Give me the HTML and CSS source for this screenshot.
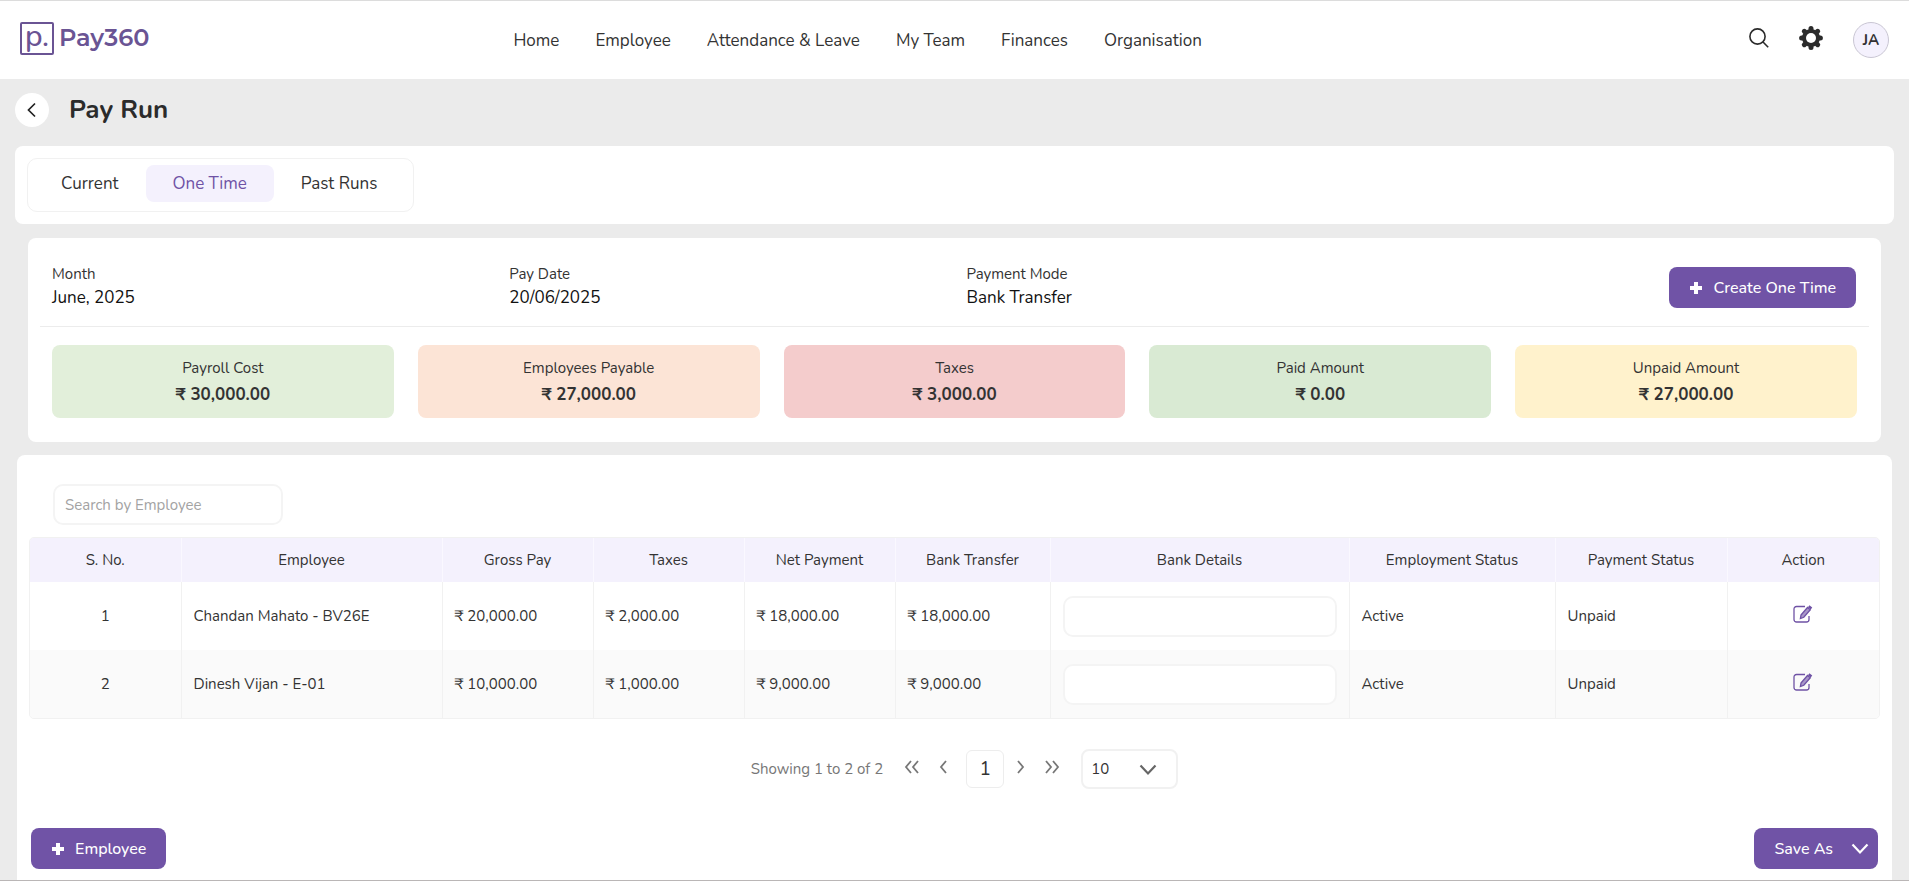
FILE: index.html
```html
<!DOCTYPE html>
<html lang="en">
<head>
    <meta charset="UTF-8">
    <meta name="viewport" content="width=device-width, initial-scale=1.0">
    <title>Pay Run - Pay360</title>
    <link rel="stylesheet" href="styles.css">
</head>
<body>
    <header class="topbar">
        <a href="#" class="logo">
            <span class="logo-box">p.</span>
            <span class="logo-text">Pay360</span>
        </a>
        <nav class="main-nav">
            <a href="#">Home</a>
            <a href="#">Employee</a>
            <a href="#">Attendance &amp; Leave</a>
            <a href="#">My Team</a>
            <a href="#">Finances</a>
            <a href="#">Organisation</a>
        </nav>
        <div class="top-actions">
            <button type="button" class="icon-btn" aria-label="Search">
                <svg width="20" height="20" viewBox="0 0 20 20" fill="none" stroke="#2b2b2b" stroke-width="1.6">
                    <circle cx="8.5" cy="8.5" r="7.6"/>
                    <path d="M14 14l5.2 5.2"/>
                </svg>
            </button>
            <button type="button" class="icon-btn" aria-label="Settings">
                <svg width="24" height="24" viewBox="0 0 24 24">
                    <g stroke="#2b2b2b" stroke-width="5" stroke-linecap="round">
                        <path d="M12 2.6v18.8M2.6 12h18.8M5.3 5.3l13.4 13.4M18.7 5.3L5.3 18.7"/>
                    </g>
                    <circle cx="12" cy="12" r="9" fill="#2b2b2b"/>
                    <circle cx="12" cy="12" r="5" fill="#fff"/>
                </svg>
            </button>
            <button type="button" class="avatar">JA</button>
        </div>
    </header>

    <main class="page">
        <div class="page-head">
            <button type="button" class="back-btn" aria-label="Back">
                <svg width="10" height="16" viewBox="0 0 10 16" fill="none" stroke="#222" stroke-width="1.7">
                    <path d="M8 1.5L1.5 8l6.5 6.5"/>
                </svg>
            </button>
            <h1>Pay Run</h1>
        </div>

        <section class="card tabs-card">
            <div class="tabs">
                <button type="button" class="tab">Current</button>
                <button type="button" class="tab active">One Time</button>
                <button type="button" class="tab">Past Runs</button>
            </div>
        </section>

        <section class="card summary">
            <div class="summary-top">
                <div class="field">
                    <span class="field-label">Month</span>
                    <span class="field-value">June, 2025</span>
                </div>
                <div class="field">
                    <span class="field-label">Pay Date</span>
                    <span class="field-value">20/06/2025</span>
                </div>
                <div class="field">
                    <span class="field-label">Payment Mode</span>
                    <span class="field-value">Bank Transfer</span>
                </div>
                <button type="button" class="btn btn-create">
                    <svg width="14" height="14" viewBox="0 0 14 14" fill="#fff"><path d="M5 1h4v4h4v4H9v4H5V9H1V5h4z"/></svg>
                    Create One Time
                </button>
            </div>
            <div class="stats">
                <div class="stat stat-cost">
                    <span>Payroll Cost</span>
                    <strong>₹ 30,000.00</strong>
                </div>
                <div class="stat stat-payable">
                    <span>Employees Payable</span>
                    <strong>₹ 27,000.00</strong>
                </div>
                <div class="stat stat-taxes">
                    <span>Taxes</span>
                    <strong>₹ 3,000.00</strong>
                </div>
                <div class="stat stat-paid">
                    <span>Paid Amount</span>
                    <strong>₹ 0.00</strong>
                </div>
                <div class="stat stat-unpaid">
                    <span>Unpaid Amount</span>
                    <strong>₹ 27,000.00</strong>
                </div>
            </div>
        </section>

        <section class="card employees">
            <input type="text" class="input search" placeholder="Search by Employee" aria-label="Search by Employee">

            <div class="table-wrap">
                <table>
                    <colgroup>
                        <col class="col-small">
                        <col class="col-employee">
                        <col class="col-small">
                        <col class="col-small">
                        <col class="col-small">
                        <col class="col-transfer">
                        <col class="col-details">
                        <col class="col-emp-status">
                        <col class="col-pay-status">
                        <col>
                    </colgroup>
                    <thead>
                        <tr>
                            <th>S. No.</th>
                            <th>Employee</th>
                            <th>Gross Pay</th>
                            <th>Taxes</th>
                            <th>Net Payment</th>
                            <th>Bank Transfer</th>
                            <th>Bank Details</th>
                            <th>Employment Status</th>
                            <th>Payment Status</th>
                            <th>Action</th>
                        </tr>
                    </thead>
                    <tbody>
                        <tr>
                            <td class="center">1</td>
                            <td>Chandan Mahato - BV26E</td>
                            <td>₹ 20,000.00</td>
                            <td>₹ 2,000.00</td>
                            <td>₹ 18,000.00</td>
                            <td>₹ 18,000.00</td>
                            <td><input type="text" class="input" aria-label="Bank details for Chandan Mahato"></td>
                            <td>Active</td>
                            <td>Unpaid</td>
                            <td class="center">
                                <button type="button" class="icon-btn" aria-label="Edit Chandan Mahato">
                                    <svg width="20" height="18" viewBox="0 0 20 18" fill="none" stroke="#6f52a5" stroke-width="1.3">
                                        <path d="M12 1.5H3.5a2.5 2.5 0 0 0-2.5 2.5v10.5A2.5 2.5 0 0 0 3.5 17h10a2.5 2.5 0 0 0 2.5-2.5V11"/>
                                        <path d="M8 10l6.5-7.5 2.8 2.3-6.5 7.5-3.4 1.3z" fill="#a896c9"/>
                                        <path d="M15.7 1.2l2.8 2.3" stroke-width="2.4"/>
                                    </svg>
                                </button>
                            </td>
                        </tr>
                        <tr>
                            <td class="center">2</td>
                            <td>Dinesh Vijan - E-01</td>
                            <td>₹ 10,000.00</td>
                            <td>₹ 1,000.00</td>
                            <td>₹ 9,000.00</td>
                            <td>₹ 9,000.00</td>
                            <td><input type="text" class="input" aria-label="Bank details for Dinesh Vijan"></td>
                            <td>Active</td>
                            <td>Unpaid</td>
                            <td class="center">
                                <button type="button" class="icon-btn" aria-label="Edit Dinesh Vijan">
                                    <svg width="20" height="18" viewBox="0 0 20 18" fill="none" stroke="#6f52a5" stroke-width="1.3">
                                        <path d="M12 1.5H3.5a2.5 2.5 0 0 0-2.5 2.5v10.5A2.5 2.5 0 0 0 3.5 17h10a2.5 2.5 0 0 0 2.5-2.5V11"/>
                                        <path d="M8 10l6.5-7.5 2.8 2.3-6.5 7.5-3.4 1.3z" fill="#a896c9"/>
                                        <path d="M15.7 1.2l2.8 2.3" stroke-width="2.4"/>
                                    </svg>
                                </button>
                            </td>
                        </tr>
                    </tbody>
                </table>
            </div>

            <div class="pagination">
                <span class="showing">Showing 1 to 2 of 2</span>
                <div class="pager">
                    <button type="button" class="icon-btn page-arrow" aria-label="First page">
                        <svg width="16" height="14" viewBox="0 0 16 14"><path d="M7 1L2 7l5 6M14 1L9 7l5 6"/></svg>
                    </button>
                    <button type="button" class="icon-btn page-arrow" aria-label="Previous page">
                        <svg width="8" height="14" viewBox="0 0 8 14"><path d="M7 1L2 7l5 6"/></svg>
                    </button>
                    <button type="button" class="page-number">1</button>
                    <button type="button" class="icon-btn page-arrow" aria-label="Next page">
                        <svg width="8" height="14" viewBox="0 0 8 14"><path d="M1 1l5 6-5 6"/></svg>
                    </button>
                    <button type="button" class="icon-btn page-arrow" aria-label="Last page">
                        <svg width="16" height="14" viewBox="0 0 16 14"><path d="M2 1l5 6-5 6M9 1l5 6-5 6"/></svg>
                    </button>
                </div>
                <div class="page-size">
                    <select aria-label="Rows per page">
                        <option>10</option>
                        <option>25</option>
                        <option>50</option>
                    </select>
                    <svg width="18" height="12" viewBox="0 0 18 12"><path d="M1.5 1.5L9 9.5l7.5-8"/></svg>
                </div>
            </div>

            <div class="footer-actions">
                <button type="button" class="btn btn-employee">
                    <svg width="14" height="14" viewBox="0 0 14 14" fill="#fff"><path d="M5 1h4v4h4v4H9v4H5V9H1V5h4z"/></svg>
                    Employee
                </button>
                <button type="button" class="btn btn-save">
                    Save As
                    <svg width="18" height="12" viewBox="0 0 18 12" fill="none" stroke="#fff" stroke-width="2.2"><path d="M1.5 1.5L9 9.5l7.5-8"/></svg>
                </button>
            </div>
        </section>
    </main>
</body>
</html>
```

FILE: styles.css
```css
* {
    box-sizing: border-box;
}
body {
    margin: 0;
    min-height: 100vh;
    display: flex;
    flex-direction: column;
    font-family: Nunito, "Open Sans", "Noto Sans", sans-serif;
    font-size: 15px;
    line-height: 20px;
    color: #333;
    background-color: #ebebeb;
    border-top: 1px solid #dcdcdc;
    border-bottom: 2px solid #bab6b6;
}
button, input, select {
    font: inherit;
    color: inherit;
}
button {
    cursor: pointer;
}
svg {
    display: block;
}

/* Top bar */
.topbar {
    display: grid;
    grid-template-columns: 26.4% 1fr auto;
    align-items: center;
    height: 78px;
    padding: 0 20px;
    background-color: #fff;
}
.logo {
    display: flex;
    align-items: center;
    gap: 5px;
    padding-bottom: 4px;
    color: #6a5494;
    text-decoration: none;
}
.logo-box {
    width: 34px;
    height: 33px;
    border: 2px solid #6a5494;
    border-radius: 2px;
    font-size: 30px;
    line-height: 26px;
    font-weight: 500;
    text-align: center;
}
.logo-text {
    font-family: Montserrat, Lato, sans-serif;
    font-size: 24px;
    line-height: 32px;
    font-weight: 600;
}
.main-nav {
    display: flex;
    gap: 36px;
    padding-top: 2px;
}
.main-nav a {
    color: #333;
    font-size: 17px;
    text-decoration: none;
}
.top-actions {
    display: flex;
    justify-content: flex-end;
    align-items: center;
    gap: 30px;
}
.icon-btn {
    display: inline-block;
    padding: 0 0 4px;
    border: none;
    background: none;
}
.avatar {
    width: 36px;
    height: 36px;
    padding: 0;
    border: 1px solid #c9c6d3;
    border-radius: 50%;
    background-color: #f4f1fd;
    font-weight: 700;
}

/* Page heading */
.page {
    flex: 1;
    display: flex;
    flex-direction: column;
    padding: 14px 15px 0;
}
.page-head {
    display: flex;
    align-items: center;
    gap: 20px;
    margin-bottom: 19px;
}
.back-btn {
    display: flex;
    align-items: center;
    justify-content: center;
    width: 34px;
    height: 34px;
    padding: 0;
    border: none;
    border-radius: 50%;
    background-color: #fff;
}
h1 {
    margin: 0;
    font-size: 26px;
    line-height: 32px;
    font-weight: 700;
    color: #2b2b2b;
}
.card {
    background-color: #fff;
    border-radius: 8px;
}

/* Tabs */
.tabs-card {
    padding: 12px;
}
.tabs {
    display: inline-flex;
    padding: 6px 9px 9px 6px;
    border: 1px solid #f1f1f1;
    border-radius: 10px;
    vertical-align: top;
}
.tab {
    height: 37px;
    padding: 0 27px;
    border: none;
    border-radius: 8px;
    background: none;
    font-size: 17px;
}
.tab.active {
    background-color: #f4f1fd;
    color: #6f52a5;
}

/* Summary */
.summary {
    margin: 14px 13px 13px;
    padding: 17px 12px 24px;
}
.summary-top {
    display: flex;
    align-items: center;
    padding-bottom: 6px;
    height: 72px;
    border-bottom: 1px solid #ececec;
}
.field {
    display: flex;
    flex-direction: column;
    gap: 4px;
    width: 25%;
    padding: 0 0 4px 12px;
}
.field-value {
    font-size: 17px;
    color: #111;
}
.btn {
    display: flex;
    align-items: center;
    height: 41px;
    border: none;
    border-radius: 8px;
    background-color: #7053a6;
    color: #fff;
    font-size: 16px;
    font-weight: 500;
    white-space: nowrap;
}
.btn-create {
    gap: 10px;
    margin-left: auto;
    margin-right: 13px;
    padding: 0 20px;
}
.stats {
    display: flex;
    gap: 24px;
    padding: 18px 12px 0;
}
.stat {
    flex: 1;
    display: flex;
    flex-direction: column;
    gap: 7px;
    padding: 13px 12px;
    border-radius: 8px;
    text-align: center;
}
.stat strong {
    font-size: 17px;
    font-weight: 700;
}
.stat-cost {
    background-color: #e2efda;
}
.stat-payable {
    background-color: #fce4d6;
}
.stat-taxes {
    background-color: #f4cccc;
}
.stat-paid {
    background-color: #d9ead3;
}
.stat-unpaid {
    background-color: #fff2cc;
}

/* Employees */
.employees {
    flex: 1;
    display: flex;
    flex-direction: column;
    margin: 0 2px;
    padding: 29px 12px 11px;
    border-radius: 8px 8px 0 0;
}
.input {
    width: 100%;
    height: 41px;
    padding: 0 10px;
    border: 2px solid #f4f4f4;
    border-radius: 10px;
    background-color: #fff;
}
.input::placeholder {
    color: #a3a3a3;
}
.search {
    width: 230px;
    margin: 0 24px 12px;
}
.table-wrap {
    border: 1px solid #f1f1f1;
    border-radius: 5px;
    overflow: hidden;
}
table {
    width: 100%;
    table-layout: fixed;
    border-collapse: collapse;
}
.col-small {
    width: 151px;
}
.col-employee {
    width: 261px;
}
.col-transfer {
    width: 155px;
}
.col-details {
    width: 299px;
}
.col-emp-status {
    width: 206px;
}
.col-pay-status {
    width: 172px;
}
th {
    height: 44px;
    padding: 0;
    background-color: #f4f1fd;
    border-right: 1px solid #faf8ff;
    font-weight: 400;
}
td {
    height: 68px;
    padding: 0 12px;
    border-right: 1px solid #f1f1f1;
}
th:last-child,
td:last-child {
    border-right: none;
}
tbody tr:nth-child(even) {
    background-color: #fafafa;
}
.center {
    text-align: center;
}

/* Pagination */
.pagination {
    display: flex;
    justify-content: center;
    align-items: center;
    gap: 21px;
    margin-top: 30px;
    padding-left: 20px;
}
.showing {
    color: #777;
}
.pager {
    display: flex;
    align-items: center;
    gap: 19px;
}
.page-arrow svg {
    fill: none;
    stroke: #777;
    stroke-width: 1.8;
}
.page-number {
    width: 38px;
    height: 38px;
    margin-right: -6px;
    padding: 0;
    border: 1px solid #ededed;
    border-radius: 6px;
    background-color: #fff;
    font-size: 19px;
}
.page-size {
    position: relative;
    width: 97px;
}
.page-size select {
    appearance: none;
    width: 100%;
    height: 40px;
    padding: 0 8px;
    border: 2px solid #f1f1f1;
    border-radius: 8px;
    background-color: #fff;
}
.page-size svg {
    position: absolute;
    top: 15px;
    right: 21px;
    pointer-events: none;
    fill: none;
    stroke: #666;
    stroke-width: 2.2;
}

/* Footer buttons */
.footer-actions {
    display: flex;
    justify-content: space-between;
    margin-top: auto;
    padding: 39px 2px 0;
}
.btn-employee {
    gap: 10px;
    padding: 0 20px;
}
.btn-save {
    gap: 18px;
    padding: 0 9px 0 20px;
}
```
